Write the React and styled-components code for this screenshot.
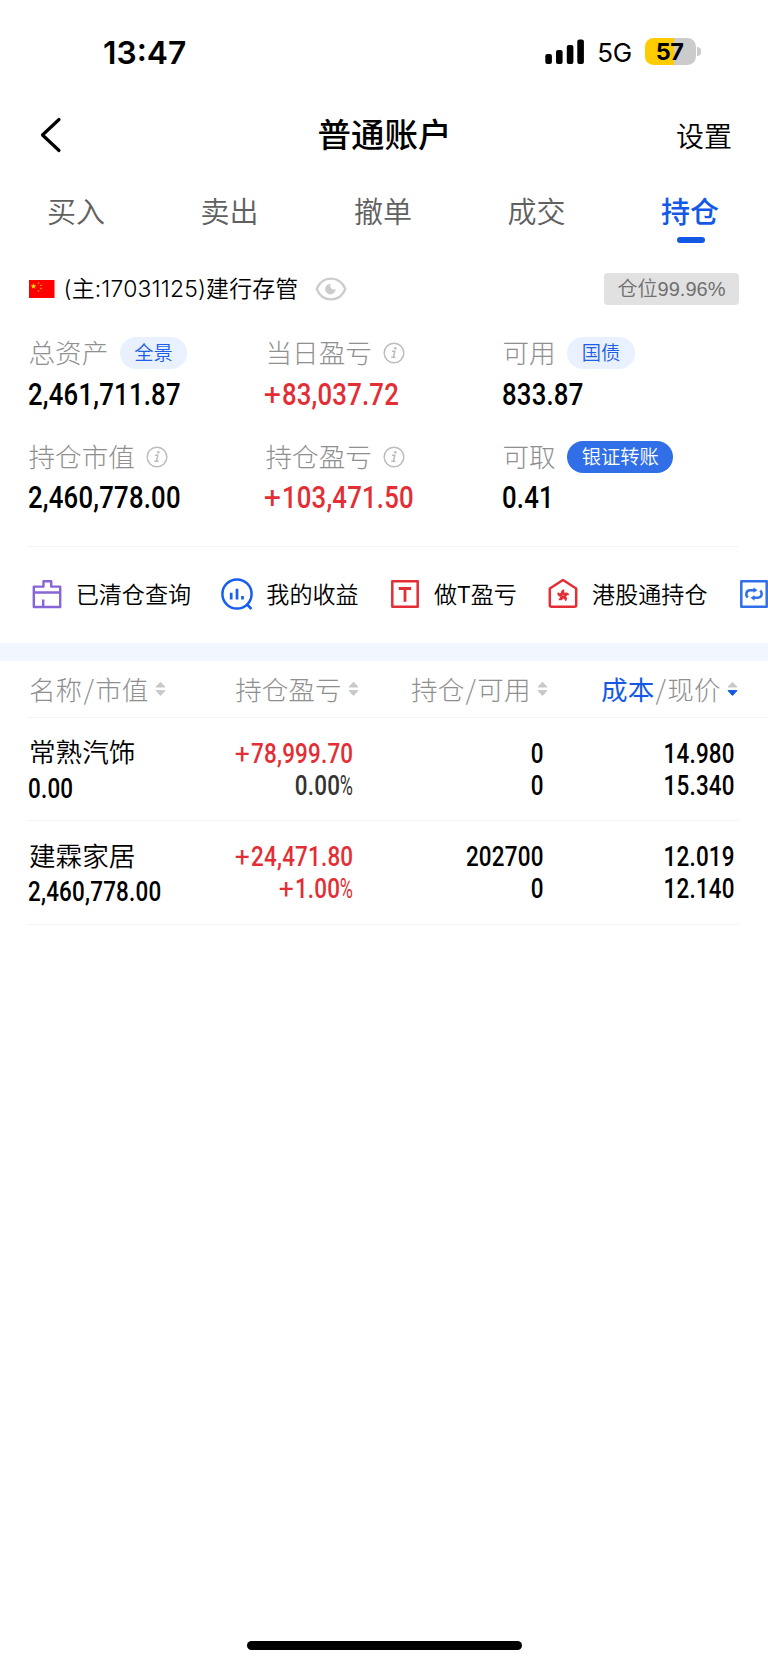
import React from "react";
import styled, { createGlobalStyle } from "styled-components";

const C = {
  blue: "#1459e6",
  red: "#e22e34",
  grey: "#8f8f8f",
  line: "#f4f4f4",
};

const Global = createGlobalStyle`
  * { box-sizing: border-box; }
  body { margin: 0; background: #fff; }
`;

const Screen = styled.div`
  width: 768px;
  height: 1665px;
  overflow: hidden;
  display: flex;
  flex-direction: column;
  background: #fff;
  color: #000;
  font-family: Inter, "Noto Sans CJK SC", sans-serif;
  white-space: nowrap;
`;

/* ---------- status bar ---------- */
const StatusBar = styled.header`
  height: 104px;
  padding: 0 67px 1px 103px;
  display: flex;
  align-items: center;
  justify-content: space-between;
`;
const Clock = styled.time`
  font-size: 31.8px;
  font-weight: 600;
  line-height: 40px;
  padding-top: 3px;
`;
const StatusRight = styled.div`
  display: flex;
  align-items: center;
`;
const Network = styled.span`
  font-size: 26px;
  line-height: 30px;
  margin: 3px 13px 0 12px;
  letter-spacing: -0.2px;
`;
const Battery = styled.div`
  width: 51px;
  height: 27px;
  border-radius: 8.5px;
  background: linear-gradient(90deg, #ffcc00 56%, #cbcbcb 56%);
  font-size: 23.5px;
  font-weight: 700;
  line-height: 27px;
  letter-spacing: -0.5px;
  padding-right: 2px;
  text-align: center;
`;
const BatteryTip = styled.i`
  width: 4px;
  height: 9px;
  margin-left: 1px;
  border-radius: 0 4px 4px 0;
  background: #cbcbcb;
`;

/* ---------- navigation ---------- */
const NavBar = styled.nav`
  height: 62px;
  padding: 0 36px 0 38px;
  display: grid;
  grid-template-columns: 1fr auto 1fr;
  align-items: center;
`;
const Title = styled.h1`
  margin: 0;
  font-size: 33.5px;
  font-weight: 500;
  line-height: 44px;
  padding: 0 1px 1px 0;
`;
const Settings = styled.span`
  justify-self: end;
  font-size: 28px;
  font-weight: 350;
  line-height: 40px;
  padding-top: 4px;
`;

const Tabs = styled.div`
  height: 88px;
  padding: 24px 0 0;
  display: grid;
  grid-template-columns: repeat(5, 153.5px);
`;
const Tab = styled.div`
  display: flex;
  flex-direction: column;
  align-items: center;
  font-size: 29px;
  line-height: 46px;
  font-weight: ${(p) => (p.$active ? 500 : 350)};
  color: ${(p) => (p.$active ? C.blue : "#606060")};
  span { margin-right: 1.5px; }
  &::after {
    content: "";
    width: 28px;
    height: 6px;
    margin-top: 1px;
    border-radius: 3px;
    background: ${(p) => (p.$active ? C.blue : "transparent")};
  }
`;

/* ---------- account ---------- */
const Account = styled.div`
  height: 70px;
  padding: 0 29px 0 28.5px;
  display: flex;
  align-items: center;
`;
const AccountName = styled.span`
  margin: 0 17px 0 9px;
  font-size: 22.9px;
  font-weight: 350;
  line-height: 32px;
  letter-spacing: 0.18px;
`;
const Position = styled.span`
  margin-left: auto;
  width: 135px;
  height: 32px;
  border-radius: 4px;
  background: #e1e1e1;
  color: #707070;
  font: 350 20px/32px "Liberation Sans", "Noto Sans CJK SC", sans-serif;
  text-align: center;
`;

const Summary = styled.section`
  margin: 0 29px 0 28px;
  height: 222.5px;
  border-bottom: 1px solid ${C.line};
  display: grid;
  grid-template-columns: repeat(3, 237px);
  grid-template-rows: 103.5px 103.5px;
`;
const Metric = styled.div`
  padding: 12px 0 0 0.5px;
`;
const MetricLabel = styled.div`
  height: 34px;
  margin-bottom: 4.5px;
  display: flex;
  align-items: center;
  gap: 11.5px;
  color: ${C.grey};
  font-size: 26.6px;
  font-weight: 300;
  line-height: 34px;
`;
const Pill = styled.span`
  height: 32px;
  padding: 0 14.5px;
  border-radius: 16px;
  font-size: 19.3px;
  font-weight: 350;
  line-height: 33px;
  color: ${(p) => (p.$solid ? "#fff" : "#1f5fe8")};
  background: ${(p) => (p.$solid ? "#316fe9" : "#eaf1fe")};
`;
const Figure = styled.span`
  display: inline-block;
  font-family: Roboto, sans-serif;
  font-weight: 500;
  font-size: ${(p) => (p.$large ? 31 : 27)}px;
  line-height: ${(p) => (p.$large ? 40 : 32)}px;
  letter-spacing: 0.25px;
  margin-left: ${(p) => (p.$end ? 0 : -0.7)}px;
  color: ${(p) => p.$color || "#000"};
  transform: scaleX(0.83);
  transform-origin: ${(p) => (p.$end ? "right" : "left")} center;
`;
const Plus = styled.span`
  display: inline-block;
  font-weight: 400;
  margin-right: 2.5px;
  transform: scaleX(1.18);
`;
const Percent = styled.span`
  display: inline-block;
  font-weight: 400;
  margin-left: -5px;
  transform: scaleX(0.8);
  transform-origin: right center;
`;

/* ---------- shortcuts ---------- */
const Shortcuts = styled.section`
  height: 96px;
  padding: 0 0 1px 29.5px;
  display: flex;
  align-items: center;
  gap: 29px;
  overflow: hidden;
`;
const Shortcut = styled.div`
  flex: none;
  display: flex;
  align-items: center;
  gap: 12.2px;
  font-size: 23.1px;
  font-weight: 350;
  line-height: 32px;
  font-family: "Noto Sans CJK SC", sans-serif;
  svg { flex: none; }
  span { padding-bottom: 3px; }
`;
const Band = styled.div`
  height: 18px;
  background: #f2f6fe;
`;

/* ---------- holdings ---------- */
const columns = "140px 190px 189px 190px";
const HeadRow = styled.div`
  height: 57px;
  margin-left: 28px;
  padding-left: 1px;
  border-bottom: 1px solid ${C.line};
  display: grid;
  grid-template-columns: ${columns};
  align-items: center;
`;
const Head = styled.div`
  display: flex;
  align-items: center;
  justify-content: ${(p) => (p.$start ? "flex-start" : "flex-end")};
  gap: 6.5px;
  color: ${C.grey};
  font-family: "Noto Sans CJK SC", sans-serif;
  font-size: 26.6px;
  font-weight: 300;
  line-height: 36px;
  b { font-weight: 400; color: ${C.blue}; }
`;
const Slash = styled.span`
  margin: 0 1.3px;
`;
const Row = styled.div`
  height: 103.5px;
  margin: 0 29px 0 28px;
  padding: 20px 0 0 1px;
  border-bottom: 1px solid ${C.line};
  display: grid;
  grid-template-columns: ${columns};
`;
const Cell = styled.div`
  display: flex;
  flex-direction: column;
  align-items: ${(p) => (p.$start ? "flex-start" : "flex-end")};
  padding-right: ${(p) => p.$inset || 0}px;
`;
const StockName = styled.span`
  font-size: 26.6px;
  font-weight: 350;
  line-height: 35px;
  height: 35px;
  margin-top: -2.5px;
  margin-bottom: 2.5px;
`;

const HomeBar = styled.div`
  width: 275px;
  height: 9px;
  margin: auto auto 15px 246.5px;
  border-radius: 5px;
  background: #000;
`;

/* ---------- icons ---------- */
const Signal = () => (
  <svg width="40" height="26" viewBox="0 0 40 26">
    <rect x="0.3" y="15" width="6.6" height="10" rx="2" />
    <rect x="11" y="11" width="6.6" height="14" rx="2" />
    <rect x="21.8" y="6" width="6.6" height="19" rx="2" />
    <rect x="32.3" y="0.5" width="6.6" height="24.5" rx="2" />
  </svg>
);
const Back = () => (
  <svg width="24" height="38" viewBox="0 0 24 38" fill="none" stroke="#000" strokeWidth="3.2" strokeLinecap="round" strokeLinejoin="round">
    <path d="M21 3.5 4.5 19 21 34.5" />
  </svg>
);
const star = (cx, cy, r, turn = -90) =>
  Array.from({ length: 10 }, (_, i) => {
    const a = ((turn + i * 36) * Math.PI) / 180;
    const k = i % 2 ? r * 0.4 : r;
    return `${(cx + k * Math.cos(a)).toFixed(2)},${(cy + k * Math.sin(a)).toFixed(2)}`;
  }).join(" ");
const Flag = () => (
  <svg width="26" height="18" viewBox="0 0 26 18">
    <rect width="25.5" height="18" fill="#fe0000" />
    <g fill="#ffe600">
      <polygon points={star(4.5, 6.3, 3)} />
      <polygon points={star(9.5, 3, 1.1)} />
      <polygon points={star(12, 5.3, 1.1)} />
      <polygon points={star(12, 8.6, 1.1)} />
      <polygon points={star(9.5, 11, 1.1)} />
    </g>
  </svg>
);
const Eye = () => (
  <svg width="32" height="24" viewBox="0 0 32 24" fill="none">
    <path d="M1.7 12C4.5 5 9.5 1.6 16 1.6S27.5 5 30.3 12C27.5 19 22.5 22.4 16 22.4S4.5 19 1.7 12Z" stroke="#ccc" strokeWidth="2.3" />
    <path d="M15.5 6.8a5.3 5.3 0 1 0 5.2 5.2c-1.8 1-3.3.7-4.3-.5-1-1.3-1.4-2.9-.9-4.7Z" fill="#ccc" />
  </svg>
);
const Info = () => (
  <svg width="22" height="22" viewBox="0 0 22 22" fill="none" stroke="#bdbdbd">
    <circle cx="11" cy="11" r="9.8" strokeWidth="1.5" />
    <path d="M9 9.2h2.9l-1.5 5.7c-.2.8.7.8 1.9-.2M8.3 15.3h2" strokeWidth="1.5" />
    <circle cx="12.3" cy="6.3" r="1.3" fill="#bdbdbd" stroke="none" />
  </svg>
);
const Sort = ({ active }) => (
  <svg width="11" height="16" viewBox="0 0 11 16" strokeLinejoin="round" strokeWidth="1">
    <path d="M5.5 1.2 10 6H1Z" fill="#c9c9c9" stroke="#c9c9c9" />
    <path d="M1 9.6h9L5.5 14.4Z" fill={active ? C.blue : "#c9c9c9"} stroke={active ? C.blue : "#c9c9c9"} />
  </svg>
);
const iconProps = { width: 34, height: 34, viewBox: "0 0 34 34", fill: "none", strokeLinejoin: "round" };
const Cleared = () => (
  <svg {...iconProps} stroke="#8865d5" strokeWidth="2.4">
    <path d="M3.8 9.6h9.7V4.2h7.7v5.4h9V30H3.8ZM3.8 15.5h26.4M13.2 22.5V30" />
  </svg>
);
const Earnings = () => (
  <svg {...iconProps} stroke="#165df0" strokeWidth="2.5">
    <circle cx="17" cy="17" r="14.6" />
    <path d="m26.5 27 5 5" />
    <path d="M11.2 15.8v6.7M17 11.8v10.7M22.5 19v3.5" strokeWidth="2.7" />
  </svg>
);
const DayTrade = () => (
  <svg {...iconProps} stroke="#e22e34" strokeWidth="2.5">
    <path d="M4.3 4.3h25.4v25.4H4.3Z" />
    <path d="M10.8 11.5h12.4M17 11.5v13.3" strokeWidth="2.8" />
  </svg>
);
const HongKong = () => (
  <svg {...iconProps} stroke="#e22e34" strokeWidth="2.5">
    <path d="M17 3 30.2 11.5v16.5a1.7 1.7 0 0 1-1.7 1.7h-23a1.7 1.7 0 0 1-1.7-1.7V11.5Z" />
    <g fill="#e22e34" stroke="none">
      {[0, 72, 144, 216, 288].map((a) => (
        <path key={a} transform={`rotate(${a} 17 18.5)`} d="M17 18.2c-3.1-1.6-2.6-4.9.9-6 .9 1-.3 1.8.5 2.9.6 1.1.1 2.5-1.4 3.1Z" />
      ))}
    </g>
  </svg>
);
const Transfer = () => (
  <svg {...iconProps} stroke="#316fe9" strokeWidth="2.5">
    <path d="M4.3 4.3h25.4v25.4H4.3Z" />
    <path d="M10.7 20.5C8 17.5 9.5 13.3 13 13.3h4.5M23.3 13.5c2.7 3 1.2 7.2-2.3 7.2h-4.5" />
    <path d="m16.5 10.3 4 3-4 2.4ZM17.5 18.3l-4 2.4 4 3Z" fill="#316fe9" stroke="none" />
  </svg>
);

/* ---------- data ---------- */
const tabs = ["买入", "卖出", "撤单", "成交", "持仓"];
const metrics = [
  { label: "总资产", pill: "全景", value: "2,461,711.87" },
  { label: "当日盈亏", info: true, value: "+83,037.72" },
  { label: "可用", pill: "国债", value: "833.87" },
  { label: "持仓市值", info: true, value: "2,460,778.00" },
  { label: "持仓盈亏", info: true, value: "+103,471.50" },
  { label: "可取", pill: "银证转账", solid: true, value: "0.41" },
];
const shortcuts = [
  ["已清仓查询", Cleared],
  ["我的收益", Earnings],
  ["做T盈亏", DayTrade],
  ["港股通持仓", HongKong],
  ["", Transfer],
];
const holdings = [
  { name: "常熟汽饰", market: "0.00", profit: "+78,999.70", rate: "0.00%", held: "0", free: "0", cost: "14.980", price: "15.340" },
  { name: "建霖家居", market: "2,460,778.00", profit: "+24,471.80", rate: "+1.00%", held: "202700", free: "0", cost: "12.019", price: "12.140" },
];

function Num({ children, base, ...rest }) {
  const up = children.startsWith("+");
  const pct = children.endsWith("%");
  const body = children.replace(/[+%]/g, "");
  return (
    <Figure $color={up ? C.red : base} {...rest}>
      {up && <Plus>+</Plus>}
      {body}
      {pct && <Percent>%</Percent>}
    </Figure>
  );
}

export default function App() {
  return (
    <Screen>
      <Global />
      <StatusBar>
        <Clock>13:47</Clock>
        <StatusRight>
          <Signal />
          <Network>5G</Network>
          <Battery>57</Battery>
          <BatteryTip />
        </StatusRight>
      </StatusBar>
      <NavBar>
        <Back />
        <Title>普通账户</Title>
        <Settings>设置</Settings>
      </NavBar>
      <Tabs>
        {tabs.map((t) => (
          <Tab key={t} $active={t === "持仓"}><span>{t}</span></Tab>
        ))}
      </Tabs>
      <Account>
        <Flag />
        <AccountName>(主:17031125)建行存管</AccountName>
        <Eye />
        <Position>仓位99.96%</Position>
      </Account>
      <Summary>
        {metrics.map((m) => (
          <Metric key={m.label}>
            <MetricLabel>
              {m.label}
              {m.pill && <Pill $solid={m.solid}>{m.pill}</Pill>}
              {m.info && <Info />}
            </MetricLabel>
            <Num $large>{m.value}</Num>
          </Metric>
        ))}
      </Summary>
      <Shortcuts>
        {shortcuts.map(([label, Icon]) => (
          <Shortcut key={label}>
            <Icon />
            {label && <span>{label}</span>}
          </Shortcut>
        ))}
      </Shortcuts>
      <Band />
      <HeadRow>
        <Head $start><span>名称<Slash>/</Slash>市值</span><Sort /></Head>
        <Head>持仓盈亏<Sort /></Head>
        <Head><span>持仓<Slash>/</Slash>可用</span><Sort /></Head>
        <Head><span><b>成本</b><Slash>/</Slash>现价</span><Sort active /></Head>
      </HeadRow>
      {holdings.map((h) => (
        <Row key={h.name}>
          <Cell $start>
            <StockName>{h.name}</StockName>
            <Num>{h.market}</Num>
          </Cell>
          <Cell $inset={6}>
            <Num $end>{h.profit}</Num>
            <Num $end base="#333">{h.rate}</Num>
          </Cell>
          <Cell $inset={4.5}>
            <Num $end>{h.held}</Num>
            <Num $end>{h.free}</Num>
          </Cell>
          <Cell $inset={3}>
            <Num $end>{h.cost}</Num>
            <Num $end>{h.price}</Num>
          </Cell>
        </Row>
      ))}
      <HomeBar />
    </Screen>
  );
}
